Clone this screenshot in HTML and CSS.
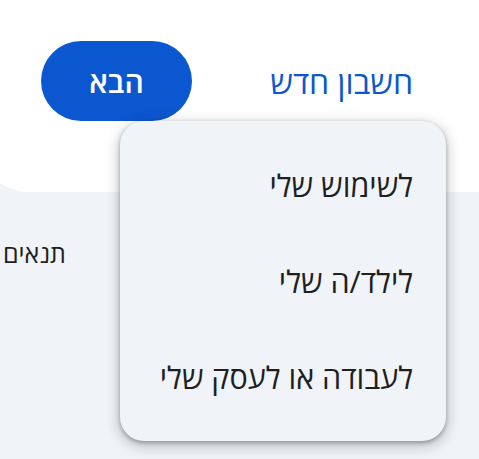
FILE: index.html
```html
<!DOCTYPE html>
<html lang="he" dir="rtl">
  <head>
    <meta charset="UTF-8" />
    <meta name="viewport" content="width=device-width, initial-scale=1.0" />
    <title>יצירת חשבון</title>
    <link rel="stylesheet" href="styles.css">
  </head>
  <body>
    <div class="card">
      <div class="actions">
        <button class="link-button" type="button">חשבון חדש</button>
        <button class="next-button" type="button">הבא</button>
      </div>
    </div>

    <footer class="footer">
      <a href="#">תנאים</a>
    </footer>

    <!-- dropdown opened from "חשבון חדש" -->
    <ul class="menu">
      <li class="menu-item">לשימוש שלי</li>
      <li class="menu-item">לילד/ה שלי</li>
      <li class="menu-item">לעבודה או לעסק שלי</li>
    </ul>
  </body>
</html>
```

FILE: styles.css
```css
body {
  margin: 0;
  padding: 0;
  background-color: #f0f4f9;
  font-family: "Open Sans", "DejaVu Sans", sans-serif;
  color: #1f1f1f;
  overflow: hidden;
  position: relative;
  height: 459px;
}
.card {
  background-color: #fff;
  height: 192px;
  margin-left: -26px; /* card runs off the left edge */
  border-bottom-left-radius: 56px;
  box-sizing: border-box;
  padding: 41px 66px 0 67px;
}
.actions {
  display: flex;
  justify-content: space-between;
  align-items: center;
  height: 80px;
}
.link-button {
  background: none;
  border: none;
  padding: 0;
  font-family: inherit;
  font-size: 32px;
  font-weight: 500;
  color: #0b57d0;
  cursor: pointer;
}
.next-button {
  width: 151px;
  height: 80px;
  border: none;
  border-radius: 40px;
  background-color: #0b57d0;
  color: #fff;
  font-family: inherit;
  font-size: 30px;
  font-weight: 600;
  cursor: pointer;
}
.footer {
  display: flex;
  justify-content: flex-end;
  padding-top: 45px;
  padding-left: 3px;
}
.footer a {
  font-size: 25px;
  line-height: 32px;
  color: #1f1f1f;
  text-decoration: none;
}
.menu {
  position: absolute;
  left: 120px;
  top: 121px;
  width: 326px;
  margin: 0;
  padding: 16px 0;
  list-style: none;
  background-color: #f0f4f9;
  border-radius: 24px;
  box-shadow: 0 2px 4px rgba(0, 0, 0, 0.3), 0 4px 12px 4px rgba(0, 0, 0, 0.15);
}
.menu-item {
  height: 96px;
  line-height: 96px;
  padding-right: 33px;
  font-size: 30.5px;
  color: #1f1f1f;
}
```
